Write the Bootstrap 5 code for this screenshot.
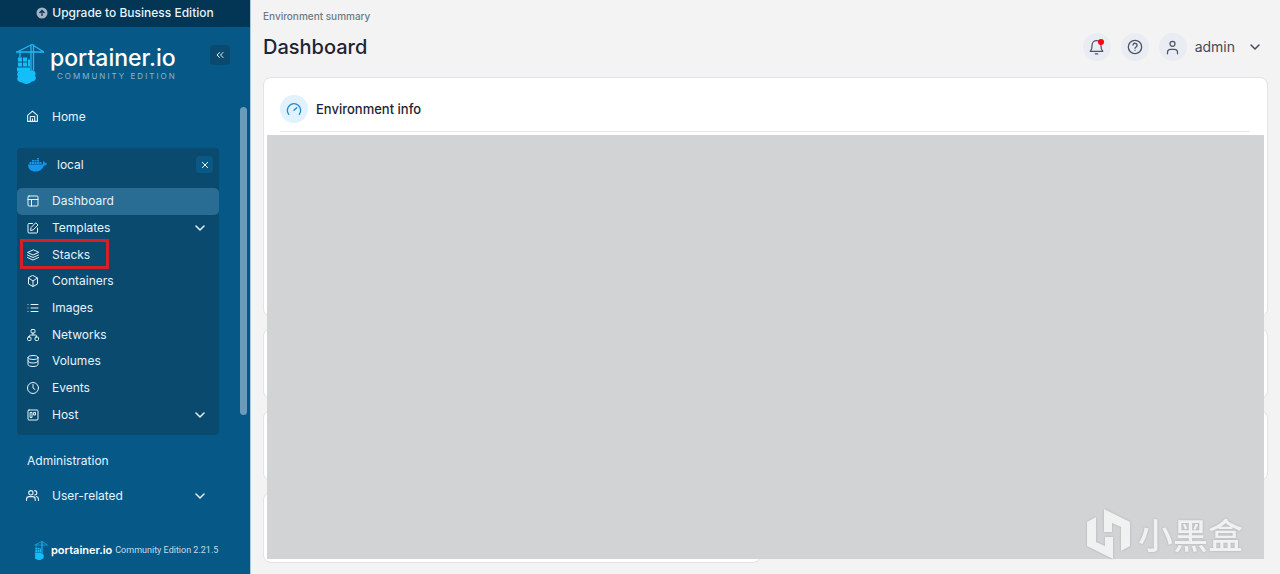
<!DOCTYPE html>
<html lang="en">
<head>
<meta charset="utf-8">
<meta name="viewport" content="width=device-width, initial-scale=1">
<title>Portainer</title>
<link rel="stylesheet" href="https://cdn.jsdelivr.net/npm/bootstrap@5.3.0/dist/css/bootstrap.min.css">
<style>
body{font-family:Inter,"Liberation Sans",sans-serif;font-size:12px;line-height:20px;background:#f3f3f3;color:#1d2433}
svg{display:block;flex:none}
.ln{fill:none;stroke:currentColor;stroke-width:2;stroke-linecap:round;stroke-linejoin:round}
.ln-bold{stroke-width:3}
button{font:inherit}
.side{width:251px;background:#065986;border-right:1px solid #a9c8e0;color:#e6f3fb}
.side a{color:inherit;text-decoration:none}
.upgrade{height:27px;background:#033555;color:#fff;font-weight:500;font-size:12px;padding-bottom:2px}
.brand-row{height:76px;padding:16px 20px 0 16px}
.brand-name{font-size:23px;line-height:26px;font-weight:500;color:#fff}
.brand-sub{font-size:8px;line-height:10px;letter-spacing:2px;color:#8db4cd;padding-left:7px}
.brand-text{margin-left:2px;padding-top:2px}
.sq{border:0;border-radius:4px;background:#0b4a6f;color:#e6f3fb;width:20px;height:20px;margin-top:2px}
.sq-sm{width:17px;height:17px;background:#0a5883;margin-top:0}
.panel{background:#0b4a6f;border-radius:4px;margin:18px 31px 0 17px;padding-bottom:7px}
.panel-head{height:40px;padding:0 6px 7px 11px;gap:10px}
.menu{height:240px}
.item{padding:0 13px 0 10px;gap:13px;border-radius:5px}
.item.on{background:#296c94}
.outer{height:27px;margin:0 31px 0 17px}
.outer .item{padding-left:9px}
.group-title{margin-top:12px;padding-left:10px}
.mark-box{left:3px;top:-2px;width:89px;height:30px;border:3px solid #d61f26}
.thumb{right:3px;top:107px;width:7px;height:308px;border-radius:4px;background:#6a9bb9}
.foot{padding:0 34px 14px;font-size:9px;color:#c3dbea;gap:3px}
.foot b{font-size:11px;font-weight:600;color:#fff}
.foot span{font-family:Roboto,sans-serif}
.page-main{padding:6px 12px 11px}
.crumb{font-size:10px;font-weight:500;color:#6f7886}
.title{font-size:20px;line-height:28px;font-weight:500;margin:0}
.top-row{height:42px}
.tools{gap:10px;padding-right:7px}
.rnd{width:28px;height:28px;border:0;border-radius:50%;background:#e9ecf2;color:#4d5566}
.user{font-size:14px;color:#444b57;background:none;border:0;padding:0;gap:8px}
.user-name{margin-right:6px}
.dot{right:7px;top:6px;width:6px;height:6px;border-radius:50%;background:#f40612}
.panes{gap:11px;margin-top:9px}
.pane{background:#fff;border:1px solid #e1e3e6;border-radius:8px;min-height:71px}
.pane-info{min-height:240px;padding:0 17px 0 16px}
.pane-head{height:54px;padding-top:8px;gap:8px;border-bottom:1px solid #e6e8eb;font-size:13px;font-weight:500;line-height:20px}
.pane-head h2{font:inherit;margin:0}
.gauge{width:28px;height:28px;border-radius:50%;background:#e0f2fe;color:#2389c4}
.half{width:calc(50% - 5px)}
.cover{inset:58px 4px 4px;background:#d1d3d4}
.wm{color:#f0f1f1;font-family:"Noto Sans CJK SC",sans-serif;font-size:35px;line-height:50px;font-weight:500;gap:8px;padding-right:21px;filter:drop-shadow(0 0 1px #aeb0b2)}
</style>
</head>
<body>
<svg width="0" height="0" class="position-absolute" aria-hidden="true">
<defs>
<symbol id="crane" viewBox="0 0 28 40">
<g fill="none" stroke="#22b8f5" stroke-width="1.3"><path d="M0 8.500H28M15 1V27M17.500 1V27M16 1L2 8M16 1L27 8M4 8V14"/></g>
<g fill="#13bef9"><path d="M2 14h4v4H2zM7 14h4v4H7zM2 19h4v4H2zM7 19h4v4H7zM12 16h2v7h-2zM1 24h13v4H1z"/><path d="M6 39c-4 0-6-3-4-6-2-3 0-6 4-6 2-3 7-2 8 0 4-1 7 2 5 5 2 3 0 6-3 6-3 3-7 3-10 1z"/></g>
</symbol>
<symbol id="chev" viewBox="0 0 24 24"><path class="ln ln-bold" d="m4 8 8 8 8-8"/></symbol>
</defs>
</svg>
<div class="d-flex min-vh-100">
<aside class="side d-flex flex-column flex-shrink-0 position-relative">
<a href="#" class="upgrade d-flex align-items-center justify-content-center gap-1"><svg width="12" height="12" viewBox="0 0 24 24"><circle cx="12" cy="12" r="11" fill="#a5b3c6"/><path d="M12 18V7m-5 5 5-5 5 5" fill="none" stroke="#033555" stroke-width="2.500"/></svg>Upgrade to Business Edition</a>
<div class="brand-row d-flex justify-content-between align-items-start">
<a href="#" class="d-flex gap-1"><svg width="28" height="41"><use href="#crane"/></svg><span class="brand-text d-flex flex-column"><span class="brand-name">portainer.io</span><span class="brand-sub">COMMUNITY EDITION</span></span></a>
<button class="sq d-flex align-items-center justify-content-center p-0" aria-label="Collapse"><svg width="12" height="12" viewBox="0 0 24 24" class="ln"><path d="m11 17-5-5 5-5M18 17l-5-5 5-5"/></svg></button>
</div>
<nav>
<div class="outer d-flex"><a href="#" class="item d-flex align-items-center flex-fill"><svg width="13" height="13" viewBox="0 0 24 24" class="ln"><path d="M3 10 12 2l9 8v11H3zM8 21v-9h8v9M12 16v5"/></svg>Home</a></div>
<div class="panel">
<div class="panel-head d-flex align-items-center">
<svg width="19" height="14" viewBox="0 0 38 28" fill="#1496ed"><path d="M0 13h28c2 0 3-2 2-5l1-2c2 1 3 3 3 4 2-.5 3 0 4 1-1 3-3 4-6 4-3 8-9 12-17 12C6 27 0 22 0 13zM3 8h4v4H3zM8 8h4v4H8zM13 8h4v4h-4zM18 8h4v4h-4zM23 8h4v4h-4zM8 4h4v3H8zM13 4h4v3h-4zM18 4h4v3h-4zM18 0h4v3h-4z"/></svg>
<span class="me-auto">local</span>
<button class="sq sq-sm d-flex align-items-center justify-content-center p-0" aria-label="Close"><svg width="8" height="8" viewBox="0 0 24 24" class="ln ln-bold"><path d="M4 4l16 16M20 4 4 20"/></svg></button>
</div>
<div class="menu d-flex flex-column">
<a href="#" class="item on d-flex align-items-center flex-fill"><svg width="12" height="12" viewBox="0 0 24 24" class="ln"><rect x="2" y="2" width="20" height="20" rx="2"/><path d="M2 9h20M9 22V9"/></svg>Dashboard</a>
<a href="#" class="item d-flex align-items-center flex-fill"><svg width="12" height="12" viewBox="0 0 24 24" class="ln"><path d="M11 3H3a2 2 0 0 0-1 2v15a2 2 0 0 0 2 2h15a2 2 0 0 0 2-2v-8M18 2l4 4-10 10-5 1 1-5z"/></svg><span class="me-auto">Templates</span><svg width="12" height="12"><use href="#chev"/></svg></a>
<a href="#" class="item d-flex align-items-center flex-fill position-relative"><svg width="12" height="12" viewBox="0 0 24 24" class="ln"><path d="M12 2 1 7l11 5 11-5zM1 12l11 5 11-5M1 17l11 5 11-5"/></svg>Stacks<span class="mark-box position-absolute"></span></a>
<a href="#" class="item d-flex align-items-center flex-fill"><svg width="12" height="12" viewBox="0 0 24 24" class="ln"><path d="M12 1 21 6v12l-9 5-9-5V6zM3 6l9 6 9-6M12 12v11"/></svg>Containers</a>
<a href="#" class="item d-flex align-items-center flex-fill"><svg width="12" height="12" viewBox="0 0 24 24" class="ln"><path d="M8 5h14M8 12h14M8 19h14M2 5h.01M2 12h.01M2 19h.01"/></svg>Images</a>
<a href="#" class="item d-flex align-items-center flex-fill"><svg width="12" height="12" viewBox="0 0 24 24" class="ln"><rect x="8" y="1" width="8" height="7" rx="2"/><rect x="1" y="16" width="7" height="7" rx="2"/><rect x="16" y="16" width="7" height="7" rx="2"/><path d="M12 8v4M5 16v-2a2 2 0 0 1 2-2h10a2 2 0 0 1 2 2v2"/></svg>Networks</a>
<a href="#" class="item d-flex align-items-center flex-fill"><svg width="12" height="12" viewBox="0 0 24 24" class="ln"><ellipse cx="12" cy="5" rx="10" ry="4"/><path d="M2 5v14c0 2 4 4 10 4s10-2 10-4V5M2 12c0 2 4 4 10 4s10-2 10-4"/></svg>Volumes</a>
<a href="#" class="item d-flex align-items-center flex-fill"><svg width="12" height="12" viewBox="0 0 24 24" class="ln"><circle cx="12" cy="12" r="11"/><path d="M12 5v7l4 3"/></svg>Events</a>
<a href="#" class="item d-flex align-items-center flex-fill"><svg width="12" height="12" viewBox="0 0 24 24" class="ln"><rect x="2" y="2" width="20" height="20" rx="2"/><path d="M7 7h3v10H7zM14 7h3v5h-3z"/></svg><span class="me-auto">Host</span><svg width="12" height="12"><use href="#chev"/></svg></a>
</div>
</div>
<div class="outer group-title d-flex align-items-center">Administration</div>
<div class="outer d-flex mt-2"><a href="#" class="item d-flex align-items-center flex-fill"><svg width="13" height="13" viewBox="0 0 24 24" class="ln"><circle cx="9" cy="7" r="4"/><path d="M1 21v-2a5 5 0 0 1 5-5h6a5 5 0 0 1 5 5v2M16 3a4 4 0 0 1 0 8M19 14a5 5 0 0 1 4 5v2"/></svg><span class="me-auto">User-related</span><svg width="12" height="12"><use href="#chev"/></svg></a></div>
</nav>
<div class="foot d-flex align-items-center mt-auto text-nowrap"><svg width="14" height="19"><use href="#crane"/></svg><b>portainer.io</b><span>Community Edition 2.21.5</span></div>
<div class="thumb position-absolute"></div>
</aside>
<main class="page-main flex-fill">
<div class="crumb">Environment summary</div>
<div class="top-row d-flex align-items-center justify-content-between">
<h1 class="title">Dashboard</h1>
<div class="tools d-flex align-items-center">
<button class="rnd d-flex align-items-center justify-content-center position-relative p-0" aria-label="Notifications"><svg width="15" height="15" viewBox="0 0 24 24" class="ln"><path d="M5 8a7 7 0 0 1 14 0c0 7 3 10 3 10H2s3-3 3-10M10 22h4"/></svg><span class="dot position-absolute"></span></button>
<button class="rnd d-flex align-items-center justify-content-center p-0" aria-label="Help"><svg width="16" height="16" viewBox="0 0 24 24" class="ln"><circle cx="12" cy="12" r="10"/><path d="M9 9a3 3 0 0 1 6 1c0 2-3 2-3 4M12 17h.01"/></svg></button>
<button class="user d-flex align-items-center"><span class="rnd d-flex align-items-center justify-content-center"><svg width="15" height="15" viewBox="0 0 24 24" class="ln"><circle cx="12" cy="6" r="4"/><path d="M4 22v-2a5 5 0 0 1 5-5h6a5 5 0 0 1 5 5v2"/></svg></span><span class="user-name">admin</span><svg width="12" height="12"><use href="#chev"/></svg></button>
</div>
</div>
<div class="panes d-flex flex-column position-relative">
<section class="pane pane-info"><div class="pane-head d-flex align-items-center"><span class="gauge d-flex align-items-center justify-content-center"><svg width="16" height="16" viewBox="0 0 24 24" class="ln"><path d="m12 14 4-4M4 20a10 10 0 1 1 16 0"/></svg></span><h2>Environment info</h2></div></section>
<section class="pane"></section>
<section class="pane"></section>
<section class="pane half"></section>
<div class="cover position-absolute d-flex align-items-end justify-content-end"><div class="wm d-flex align-items-center"><svg width="43" height="50" viewBox="0 0 43 50" fill="currentColor"><path d="M0 13 9 8v25l9 4V28h8v22L0 37zM17 0l26 13v24l-9 5V18l-9-4v9h-8z"/></svg><span>小黑盒</span></div></div>
</div>
</main>
</div>
<script src="https://cdn.jsdelivr.net/npm/bootstrap@5.3.0/dist/js/bootstrap.bundle.min.js"></script>
</body>
</html>
